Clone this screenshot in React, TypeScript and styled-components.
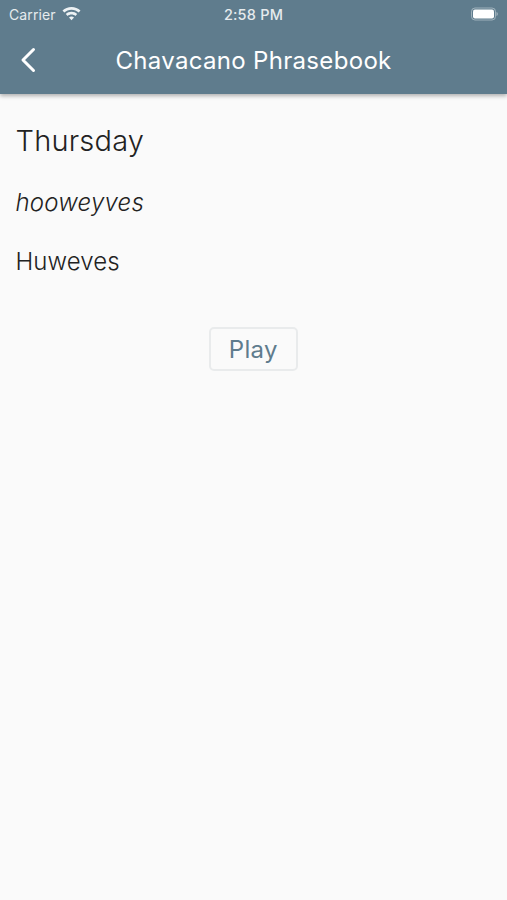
import React from 'react';
import styled, { createGlobalStyle } from 'styled-components';

const GlobalStyle = createGlobalStyle`
  html, body {
    margin: 0;
    padding: 0;
    background: #fafafa;
  }
  body {
    font-family: Inter, "Liberation Sans", sans-serif;
  }
`;

const Page = styled.div`
  width: 507px;
  height: 900px;
  background: #fafafa;
  overflow: hidden;
`;

const Header = styled.header`
  height: 94px;
  background: #5f7c8d;
  box-shadow: 0 2px 4px rgba(0, 0, 0, 0.3);
  color: #fff;
`;

const StatusBar = styled.div`
  height: 28px;
  padding: 0 9px;
  display: grid;
  grid-template-columns: 1fr auto 1fr;
  align-items: center;
  font-size: 14px;
  color: #e6ebee;
`;

const Carrier = styled.div`
  display: flex;
  align-items: center;
  gap: 6px;
  letter-spacing: 0.1px;
`;

const Time = styled.div`
  font-size: 14.5px;
  font-weight: 500;
  letter-spacing: 0.2px;
`;

const BatterySlot = styled.div`
  display: flex;
  justify-content: flex-end;
`;

const NavBar = styled.div`
  height: 64px;
  position: relative;
  display: flex;
  align-items: center;
  justify-content: center;
`;

const BackButton = styled.button`
  position: absolute;
  left: 16px;
  top: 16px;
  padding: 0;
  width: 24px;
  height: 32px;
  border: 0;
  background: none;
  display: flex;
  align-items: center;
  justify-content: center;
`;

const Title = styled.h1`
  margin: 0;
  font-size: 24px;
  font-weight: 400;
  letter-spacing: 0.32px;
  color: #fff;
`;

const Content = styled.main`
  padding: 29px 16px 0 15.5px;
  color: #222;
`;

const English = styled.div`
  font-size: 29px;
  line-height: 36px;
  font-weight: 300;
  letter-spacing: 0.2px;
`;

const Phonetic = styled.div`
  margin-top: 29px;
  font-size: 24px;
  line-height: 30px;
  font-style: italic;
  font-weight: 300;
  letter-spacing: 0.2px;
`;

const Translation = styled.div`
  margin-top: 29px;
  font-size: 24px;
  line-height: 30px;
  font-weight: 300;
  letter-spacing: 0.1px;
`;

const Actions = styled.div`
  margin-top: 50px;
  display: flex;
  justify-content: center;
`;

const PlayButton = styled.button`
  width: 89px;
  height: 44px;
  box-sizing: border-box;
  border: 2px solid #e9ebec;
  border-radius: 5px;
  background: #fafafa;
  color: #5f7c8d;
  font-family: inherit;
  font-size: 24px;
  font-weight: 400;
  letter-spacing: 0.3px;
  padding: 0;
`;

const WifiIcon = () => (
  <svg width="19" height="14" viewBox="0 0 19 14" fill="#eef2f4">
    <path d="M9.5 0C6 0 2.9 1.3.5 3.5l1.8 2C4.2 3.8 6.7 2.7 9.5 2.7s5.3 1.1 7.2 2.8l1.8-2C16.1 1.3 13 0 9.5 0z" />
    <path d="M9.5 4.8c-2.2 0-4.2.8-5.7 2.2l1.8 2c1-1 2.4-1.5 3.9-1.5s2.9.5 3.9 1.5l1.8-2c-1.5-1.4-3.5-2.2-5.7-2.2z" />
    <path d="M9.5 9.4c-1 0-1.9.4-2.5 1l2.5 2.9 2.5-2.9c-.6-.6-1.5-1-2.5-1z" />
  </svg>
);

const BatteryIcon = () => (
  <svg width="27" height="14" viewBox="0 0 27 14">
    <rect x="0.5" y="1" width="24" height="12" rx="3.5" fill="none" stroke="#eef2f4" strokeOpacity="0.45" />
    <rect x="2" y="2.5" width="21" height="9" rx="2" fill="#fff" />
    <path d="M25.5 5v4c.8-.3 1.3-1.1 1.3-2s-.5-1.7-1.3-2z" fill="#eef2f4" fillOpacity="0.5" />
  </svg>
);

const BackIcon = () => (
  <svg width="16" height="26" viewBox="0 0 16 26" fill="none">
    <path d="M13.5 2.5 L3 13 L13.5 23.5" stroke="#fff" strokeWidth="3" strokeLinecap="round" strokeLinejoin="round" />
  </svg>
);

export default function App() {
  return (
    <Page>
      <GlobalStyle />
      <Header>
        <StatusBar>
          <Carrier>
            Carrier
            <WifiIcon />
          </Carrier>
          <Time>2:58 PM</Time>
          <BatterySlot>
            <BatteryIcon />
          </BatterySlot>
        </StatusBar>
        <NavBar>
          <BackButton aria-label="Back">
            <BackIcon />
          </BackButton>
          <Title>Chavacano Phrasebook</Title>
        </NavBar>
      </Header>
      <Content>
        <English>Thursday</English>
        <Phonetic>hooweyves</Phonetic>
        <Translation>Huweves</Translation>
        <Actions>
          <PlayButton>Play</PlayButton>
        </Actions>
      </Content>
    </Page>
  );
}
